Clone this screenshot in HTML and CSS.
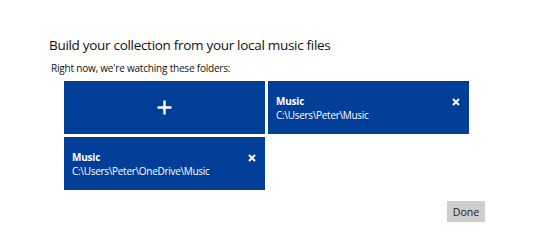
FILE: index.html
```html
<!DOCTYPE html>
<html lang="en">
<head>
    <meta charset="utf-8">
    <link rel="stylesheet" href="styles.css">
</head>
<body>
    <div class="dialog">
        <h1>Build your collection from your local music files</h1>
        <p class="intro">Right now, we're watching these folders:</p>

        <!-- Folder tiles -->
        <div class="folders">
            <button class="tile add-tile" aria-label="Add folder">
                <svg width="15" height="15" viewBox="0 0 15 15">
                    <path d="M7.5 0.5v14M0.5 7.5h14" stroke="#ffffff" stroke-width="2.4" fill="none"/>
                </svg>
            </button>
            <div class="tile folder">
                <div class="folder-text">
                    <div class="folder-name">Music</div>
                    <div class="folder-path">C:\Users\Peter\Music</div>
                </div>
                <svg class="remove" width="8" height="8" viewBox="0 0 8 8">
                    <path d="M1 1l6 6M7 1l-6 6" stroke="#ffffff" stroke-width="2" fill="none"/>
                </svg>
            </div>
            <div class="tile folder">
                <div class="folder-text">
                    <div class="folder-name">Music</div>
                    <div class="folder-path">C:\Users\Peter\OneDrive\Music</div>
                </div>
                <svg class="remove" width="8" height="8" viewBox="0 0 8 8">
                    <path d="M1 1l6 6M7 1l-6 6" stroke="#ffffff" stroke-width="2" fill="none"/>
                </svg>
            </div>
        </div>

        <div class="actions">
            <button class="done">Done</button>
        </div>
    </div>
</body>
</html>
```

FILE: styles.css
```css
/* General Styles */
body {
    margin: 0;
    padding: 0;
    background-color: #ffffff;
    font-family: "Open Sans", "Noto Sans", sans-serif;
    color: #111111;
}

.dialog {
    padding: 36px 0 0 49px;
    width: 436px;
}

h1 {
    margin: 0;
    font-size: 13.5px;
    font-weight: 400;
    line-height: 18px;
    letter-spacing: -0.3px;
}

.intro {
    margin: 8px 0 0 2px;
    font-size: 10px;
    line-height: 13px;
    letter-spacing: -0.2px;
}

/* Folder tiles */
.folders {
    display: grid;
    grid-template-columns: 201px 201px;
    grid-auto-rows: 53px;
    gap: 3px;
    margin: 6px 0 0 15px;
}

.tile {
    background-color: #003e98;
    border: none;
    margin: 0;
    color: #ffffff;
}

.add-tile {
    display: flex;
    justify-content: center;
    align-items: center;
    padding: 0;
}

.folder {
    display: flex;
    justify-content: space-between;
    align-items: flex-start;
    padding: 14px 8px 0 8px;
    box-sizing: border-box;
}

.folder-name {
    font-size: 10px;
    font-weight: 700;
    line-height: 13.6px;
    letter-spacing: -0.2px;
}

.folder-path {
    font-size: 10px;
    line-height: 13.6px;
    letter-spacing: -0.3px;
}

.remove {
    margin-top: 3px;
    margin-right: 1px;
}

/* Footer */
.actions {
    display: flex;
    justify-content: flex-end;
    margin-top: 11px;
}

.done {
    width: 38px;
    height: 21px;
    padding: 0;
    border: none;
    background-color: #cdcdcd;
    color: #222222;
    font-family: "Open Sans", "Noto Sans", sans-serif;
    font-size: 10.5px;
}
```
